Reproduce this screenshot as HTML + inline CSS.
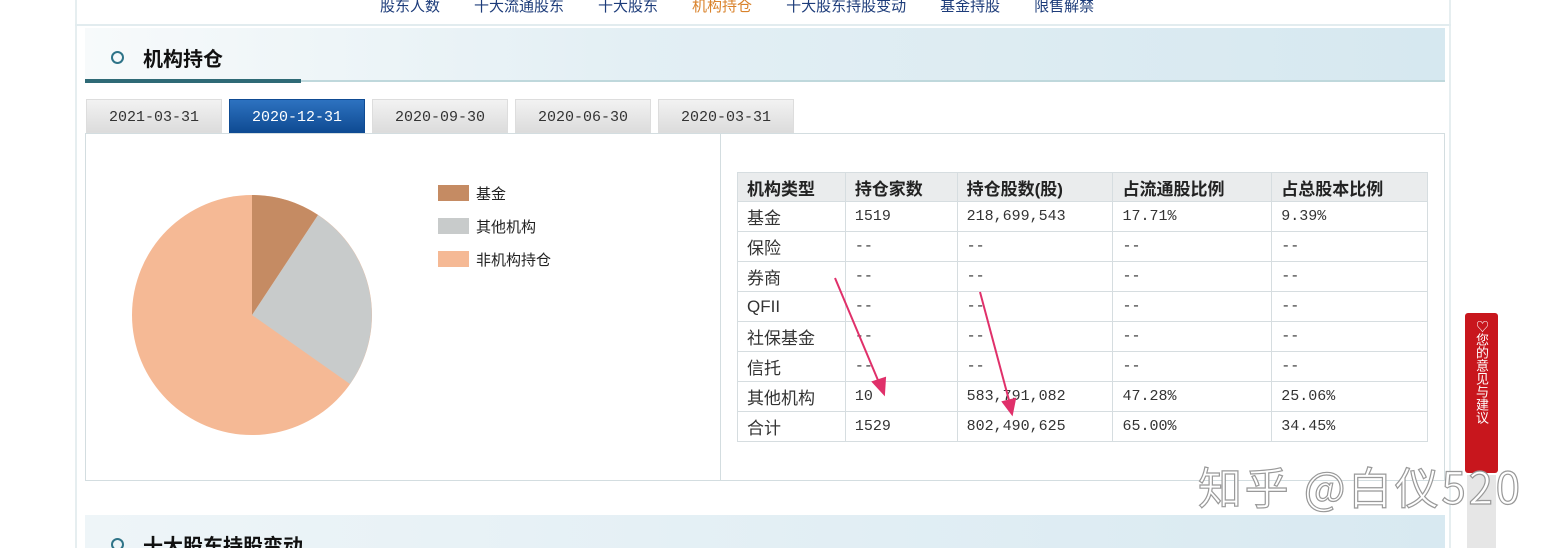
<!DOCTYPE html>
<html><head><meta charset="utf-8"><style>
*{margin:0;padding:0;box-sizing:border-box}
html,body{width:1559px;height:548px;overflow:hidden}
body{background:#fff;position:relative;font-family:"Liberation Sans","Noto Sans CJK SC",sans-serif;color:#333}
.a{position:absolute}
.nav{top:-5px;left:380px;font-size:15px;color:#1d3c7a;white-space:nowrap}
.nav span{margin-right:34px}
.tab{top:99px;height:34px;width:136px;background:linear-gradient(#f2f2f2,#dcdcdc);font-family:"Liberation Mono",monospace;font-size:15px;color:#333;text-align:center;line-height:36px;border:1px solid #ddd}
table{border-collapse:collapse;font-size:16px}
td{border:1px solid #d6dde0;height:30px;padding-left:9px;font-family:"Liberation Mono","Noto Sans CJK SC",monospace;font-size:15px;color:#333}
tr.h td{background:#eaeced;font-weight:bold;font-family:"Liberation Sans","Noto Sans CJK SC",sans-serif;font-size:17px;color:#222;height:29px}
td.c{font-family:"Liberation Sans","Noto Sans CJK SC",sans-serif;font-size:17px}
</style></head><body>
<div class="a" style="left:75px;top:0;width:1376px;height:548px;border-left:2px solid #e6eef0;border-right:2px solid #e6eef0"></div>
<div class="a" style="left:75px;top:0;width:1376px;height:26px;border-bottom:2px solid #e2ecef"></div>
<div class="a nav"><span>股东人数</span><span>十大流通股东</span><span>十大股东</span><span style="color:#d9822b">机构持仓</span><span>十大股东持股变动</span><span>基金持股</span><span>限售解禁</span></div>
<div class="a" style="left:85px;top:28px;width:1360px;height:54px;background:linear-gradient(90deg,#f7fafb 0%,#e3eff4 40%,#d6e8f0 100%)"></div>
<div class="a" style="left:111px;top:51px;width:13px;height:13px;border:2px solid #2f7488;border-radius:50%"></div>
<div class="a" style="left:143px;top:43px;font-size:20px;font-weight:bold;color:#111">机构持仓</div>
<div class="a" style="left:85px;top:80px;width:1360px;height:2px;background:#bfd8dc"></div>
<div class="a" style="left:85px;top:79px;width:216px;height:4px;background:#2f6a76"></div>
<div class="a tab" style="left:86px">2021-03-31</div>
<div class="a tab" style="left:229px;background:linear-gradient(#2d72c0,#0f4b93);color:#fff;border-color:#0f4b93">2020-12-31</div>
<div class="a tab" style="left:372px">2020-09-30</div>
<div class="a tab" style="left:515px">2020-06-30</div>
<div class="a tab" style="left:658px">2020-03-31</div>
<div class="a" style="left:85px;top:133px;width:1360px;height:348px;border:1px solid #d3dde0"></div>
<div class="a" style="left:720px;top:133px;width:1px;height:348px;background:#d3dde0"></div>
<svg class="a" style="left:0;top:0" width="720" height="480">
<circle cx="252" cy="315" r="120" fill="#f5b995"/>
<path d="M252 315 L252 195 A120 120 0 0 1 318 215 Z" fill="#c58b63"/>
<path d="M252 315 L318 215 A120 120 0 0 1 350 384 Z" fill="#c8cbcb"/>
<rect x="438" y="185" width="31" height="16" fill="#c58b63"/>
<rect x="438" y="218" width="31" height="16" fill="#c8cbcb"/>
<rect x="438" y="251" width="31" height="16" fill="#f5b995"/>
<text x="476" y="199" font-size="15" fill="#222">基金</text>
<text x="476" y="232" font-size="15" fill="#222">其他机构</text>
<text x="476" y="265" font-size="15" fill="#222">非机构持仓</text>
</svg>
<table class="a" style="left:737px;top:172px;width:691px">
<colgroup><col style="width:108px"><col style="width:112px"><col style="width:156px"><col style="width:159px"><col style="width:156px"></colgroup>
<tr class="h"><td>机构类型</td><td>持仓家数</td><td>持仓股数(股)</td><td>占流通股比例</td><td>占总股本比例</td></tr>
<tr><td class="c">基金</td><td>1519</td><td>218,699,543</td><td>17.71%</td><td>9.39%</td></tr>
<tr><td class="c">保险</td><td>--</td><td>--</td><td>--</td><td>--</td></tr>
<tr><td class="c">券商</td><td>--</td><td>--</td><td>--</td><td>--</td></tr>
<tr><td class="c">QFII</td><td>--</td><td>--</td><td>--</td><td>--</td></tr>
<tr><td class="c">社保基金</td><td>--</td><td>--</td><td>--</td><td>--</td></tr>
<tr><td class="c">信托</td><td>--</td><td>--</td><td>--</td><td>--</td></tr>
<tr><td class="c">其他机构</td><td>10</td><td>583,791,082</td><td>47.28%</td><td>25.06%</td></tr>
<tr><td class="c">合计</td><td>1529</td><td>802,490,625</td><td>65.00%</td><td>34.45%</td></tr>
</table>
<svg class="a" style="left:0;top:0" width="1559" height="548">
<g stroke="#e0306a" stroke-width="2" fill="#e0306a">
<line x1="835" y1="278" x2="880" y2="385"/><path d="M873 382 L884 394 L885 378 Z"/>
<line x1="980" y1="292" x2="1010" y2="404"/><path d="M1003 402 L1012 414 L1015 399 Z"/>
</g>
<rect x="1465" y="313" width="33" height="160" rx="3" fill="#c8161d"/>
<rect x="1467" y="475" width="29" height="73" fill="#e6e6e6"/>
<text x="1198" y="504" font-size="44" fill="#fff" stroke="#999" stroke-width="1.2" font-family="Noto Sans CJK SC,sans-serif" textLength="322">知乎 @白仪520</text>
</svg>
<div class="a" style="left:1474px;top:320px;width:16px;font-size:13px;color:#fff;line-height:17px;writing-mode:vertical-rl">♡您的意见与建议</div>
<div class="a" style="left:85px;top:515px;width:1360px;height:33px;background:linear-gradient(90deg,#eef5f8,#d8e9f1)"></div>
<div class="a" style="left:111px;top:538px;width:13px;height:13px;border:2px solid #2f7488;border-radius:50%"></div>
<div class="a" style="left:143px;top:530px;font-size:20px;font-weight:bold;color:#111">十大股东持股变动</div>
</body></html>
